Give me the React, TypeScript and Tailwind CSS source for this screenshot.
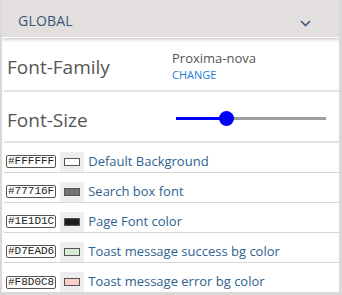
import { useState } from "react";

const colors = [
  { hex: "#FFFFFF", label: "Default Background" },
  { hex: "#77716F", label: "Search box font" },
  { hex: "#1E1D1C", label: "Page Font color" },
  { hex: "#D7EAD6", label: "Toast message success bg color" },
  { hex: "#F8D0C8", label: "Toast message error bg color" },
];

const App = () => {
  const [size] = useState(33);

  return (
    <div
      className="w-[342px] h-[295px] bg-white border-l-2 border-r-[3px] border-b-[3px] border-[#d9d9d9] flex flex-col overflow-hidden"
      style={{ fontFamily: '"Open Sans", "Noto Sans", sans-serif' }}
    >
      <div className="h-[38px] shrink-0 bg-[#e3dfdf] flex items-center justify-between pl-4 pr-[28px] border-b border-white shadow-[0_2px_3px_rgba(0,0,0,0.18)] relative z-10">
        <span className="text-[14px] text-[#3a5675] tracking-[0.2px] mt-[3px]">GLOBAL</span>
        <svg width="11" height="7" viewBox="0 0 11 7" className="mt-[10px]">
          <path d="M1 1l4.5 4.5L10 1" fill="none" stroke="#3d5a7a" strokeWidth="1.6" />
        </svg>
      </div>

      <div className="flex-1 flex flex-col pl-[2px]">
        <div className="h-[54px] shrink-0 flex items-center pt-[6px] border-b-2 border-[#e3e3e3]">
          <span className="w-[168px] pl-[3px] text-[19px] text-[#555]">Font-Family</span>
          <div className="flex flex-col -mt-[2px]">
            <span className="text-[13px] text-[#555] leading-[18px]">Proxima-nova</span>
            <span className="text-[11px] text-[#1a7bd6] leading-[16px]">CHANGE</span>
          </div>
        </div>

        <div className="h-[51px] shrink-0 flex items-center pt-[7px] border-b-2 border-[#e3e3e3]">
          <span className="w-[172px] pl-[3px] text-[19px] text-[#555]">Font-Size</span>
          <div className="relative w-[150px] h-[15px] -mt-[3px]">
            <div className="absolute left-0 right-0 top-[6px] h-[3px] bg-[#9e9e9e]" />
            <div
              className="absolute left-0 top-[6px] h-[3px] bg-[#0000ff]"
              style={{ width: `${size}%` }}
            />
            <div
              className="absolute top-0 w-[15px] h-[15px] rounded-full bg-[#0000ff]"
              style={{ left: `calc(${size}% - 7px)` }}
            />
          </div>
        </div>

        {colors.map((c, i) => (
          <div
            key={c.hex}
            className={`h-[30px] shrink-0 flex items-center pl-[2px] pt-[8px] ${
              i < colors.length - 1 ? "border-b border-[#d6d6d6]" : ""
            }`}
          >
            <span
              className="border border-[#555] rounded-[2px] px-[1px] text-[11px] leading-[11px] text-[#222]"
              style={{ fontFamily: '"Liberation Mono", monospace' }}
            >
              {c.hex}
            </span>
            <div className="ml-[4px] w-[24px] h-[20px] bg-[#eeeeee] flex items-center justify-center">
              <div
                className="w-[16px] h-[8px] border border-[#555]"
                style={{ backgroundColor: c.hex }}
              />
            </div>
            <span className="ml-[4px] text-[13px] text-[#2f5f8f]">{c.label}</span>
          </div>
        ))}
      </div>
    </div>
  );
};

export default App;
